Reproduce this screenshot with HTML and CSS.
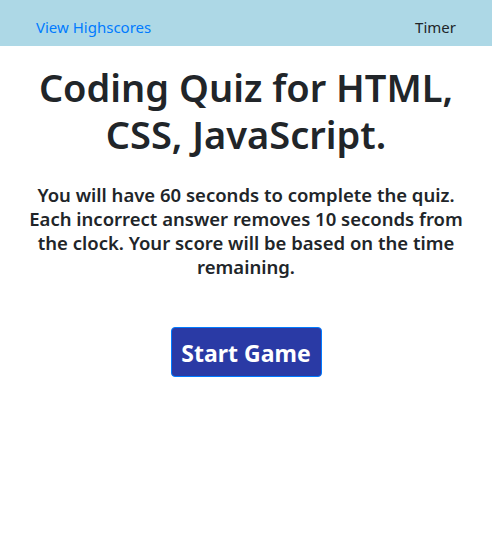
FILE: index.html
```html
<!DOCTYPE html>
<html lang="en">
<head>
<meta charset="utf-8">
<title>Coding Quiz</title>
<link rel="stylesheet" href="styles.css">
</head>
<body>
<header class="topbar">
  <a class="highscores" href="#">View Highscores</a>
  <span class="timer">Timer</span>
</header>
<main class="intro">
  <h1 class="title">Coding Quiz for HTML, CSS, JavaScript.</h1>
  <p class="rules">You will have 60 seconds to complete the quiz. Each incorrect answer removes 10 seconds from the clock. Your score will be based on the time remaining.</p>
  <button class="start" type="button">Start Game</button>
</main>
</body>
</html>
```
FILE: styles.css
```css
* { box-sizing: border-box; }
body {
  margin: 0;
  font-family: "Noto Sans", "Open Sans", sans-serif;
  color: #212529;
  background: #fff;
}
.topbar {
  height: 46px;
  background: #add8e6;
  display: flex;
  align-items: center;
  justify-content: space-between;
  padding: 7px 36px 0;
  font-size: 15px;
}
.highscores { color: #007bff; text-decoration: none; }
.timer { color: #212529; }
.intro {
  display: flex;
  flex-direction: column;
  align-items: center;
  text-align: center;
  padding: 0 26px;
}
.title {
  margin: 18px 0 0;
  font-size: 38px;
  font-weight: 600;
  line-height: 47px;
}
.rules {
  margin: 25px 0 0;
  font-size: 18.5px;
  font-weight: 600;
  line-height: 24px;
}
.start {
  margin-top: 48px;
  width: 151px;
  height: 50px;
  padding: 2px 0 0;
  background: #2a3aa5;
  color: #fff;
  border: 1px solid #007bff;
  border-radius: 4px;
  font-family: inherit;
  font-size: 23px;
  font-weight: 700;
}
```
